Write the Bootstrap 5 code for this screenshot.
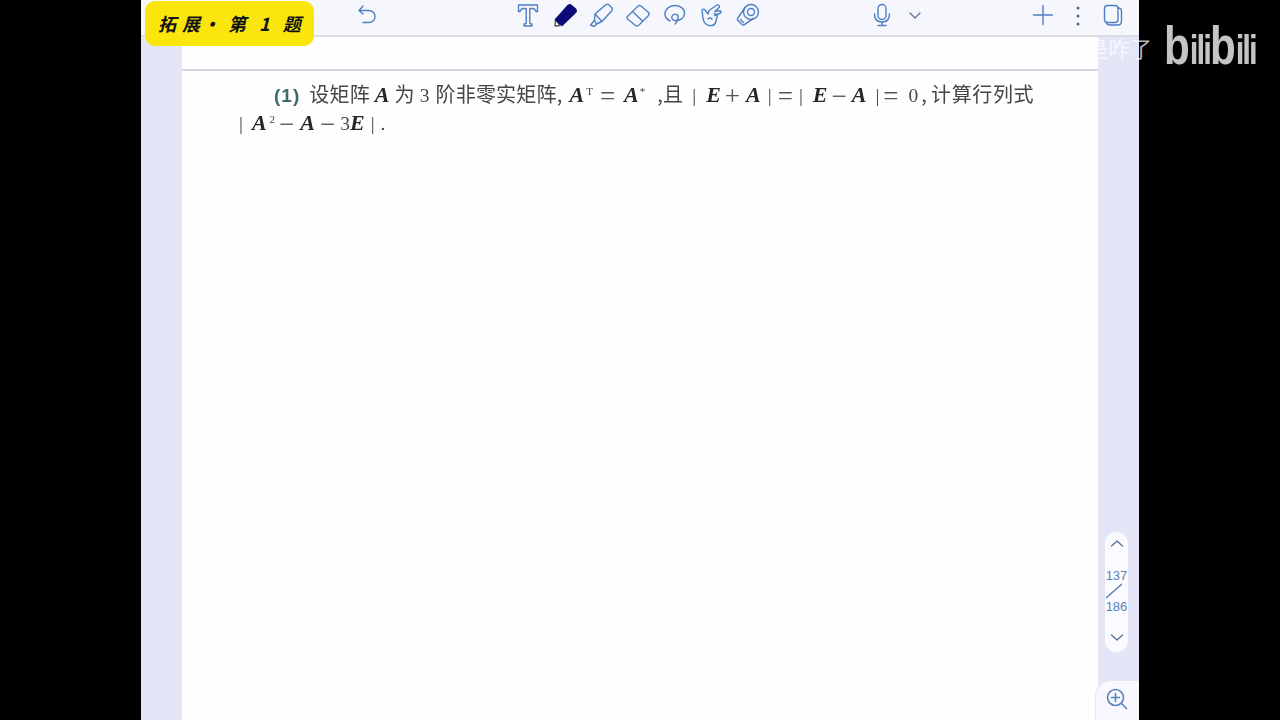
<!DOCTYPE html>
<html lang="zh">
<head>
    <meta charset="UTF-8">
    <meta name="viewport" content="width=device-width, initial-scale=1.0">
    <title>拓展 第1题</title>
    <link href="https://cdn.jsdelivr.net/npm/bootstrap@5.3.0/dist/css/bootstrap.min.css" rel="stylesheet">
    <script defer src="https://cdn.jsdelivr.net/npm/bootstrap@5.3.0/dist/js/bootstrap.bundle.min.js"></script>
    <style>
        html, body { height: 720px; overflow: hidden; background: #000; }
        #app { width: 998px; height: 720px; margin-left: 141px; background: #e4e5f6; }
        #toolbar { height: 37px; background: #f6f6fd; border-bottom: 2px solid #dcdce6; padding: 0 0 6px 214px; }
        #toolbar svg { width: 24px; height: 24px; flex: none; fill: none; stroke: #4f7fc4; stroke-width: 1.4; stroke-linecap: round; stroke-linejoin: round; }
        .tools { gap: 12.67px; margin-left: 137px; }
        .voice { gap: 9px; margin-left: 110px; }
        .actions { gap: 11px; margin-left: 104px; }
        #sheet { width: 916px; height: 683px; margin-left: 41px; background: #fefeff; }
        #sheet-top { height: 34px; border-bottom: 2px solid #d4d5de; }
        #question { padding: 8px 0 0 57px; font-family: "Liberation Serif", "Noto Sans CJK SC", serif; font-size: 19.5px; color: #45454a; line-height: 29px; filter: blur(.35px); }
        .q-line { white-space: nowrap; height: 29px; }
        .q-line + .q-line { margin-top: -1px; }
        .q-first { padding-left: 35px; }
        .q-no { color: #3d6a68; font-weight: 700; font-family: "Liberation Sans", sans-serif; font-size: 19px; letter-spacing: 1px; }
        .zh { font-family: "Noto Sans CJK SC", sans-serif; font-size: 20px; letter-spacing: .2px; }
        .zh-wide { letter-spacing: .6px; }
        .mv { font-weight: 700; font-style: italic; font-size: 22px; color: #26262a; }
        .sign { font-size: 27px; color: #55555a; position: relative; top: 3px; }
        .up { font-size: 11px; position: relative; top: -7px; }
        .sp1 { margin-left: 1px; } .sp2 { margin-left: 2px; } .sp3 { margin-left: 3px; } .sp4 { margin-left: 4px; }
        .sp5 { margin-left: 5px; } .sp6 { margin-left: 6px; } .sp7 { margin-left: 7px; } .sp8 { margin-left: 8px; }
        .sp9 { margin-left: 9px; } .sp10 { margin-left: 10px; } .sp12 { margin-left: 12px; }
        #badge { left: 145px; top: 1px; width: 169px; height: 45px; padding-left: 13px; background: #fae60c; border-radius: 10px; color: #111; font-family: "Noto Sans CJK SC", sans-serif; font-size: 18px; font-weight: 700; font-style: italic; white-space: nowrap; }
        .b-gap0 { margin-left: 6px; }
        .dot-gap { margin-left: 2px; }
        .b-gap1 { margin-left: 8px; }
        .b-gap2 { margin-left: 13px; }
        .b-gap3 { margin-left: 13px; }
        #watermark { left: 1086px; top: 31px; font-family: "Noto Sans CJK SC", sans-serif; font-size: 22px; color: rgba(255,255,255,.72); }
        #logo { left: 1164px; top: 15px; font-family: "Liberation Sans", sans-serif; font-weight: 700; color: #c4c4c4; font-size: 40px; line-height: 60px; letter-spacing: -2.5px; transform: scaleX(.78); transform-origin: left center; white-space: nowrap; }
        #logo span { font-size: 54px; letter-spacing: 0; }
        #pager { left: 1105px; top: 532px; width: 23px; height: 120px; padding: 4px 0 7px; background: #fafaff; border-radius: 12px; color: #5d82b8; font-family: "Liberation Sans", sans-serif; font-size: 13px; line-height: 15px; }
        #pager svg { width: 16px; height: 16px; fill: none; stroke: #5d7596; stroke-width: 1.4; stroke-linecap: round; stroke-linejoin: round; }
        #zoom-tab { left: 1095px; top: 680px; width: 44px; height: 40px; padding: 0 2px 3px 0; background: #f8f8fe; border-top-left-radius: 16px; border: 1px solid #e6e6ee; border-width: 1px 0 0 1px; }
        #zoom-tab svg { width: 24px; height: 24px; fill: none; stroke: #5a82bd; stroke-width: 1.6; stroke-linecap: round; }
    </style>
</head>
<body class="position-relative m-0">
    <div id="app">
        <div id="toolbar" class="d-flex align-items-center">
            <svg viewBox="0 0 24 24"><path d="M8 3 4 7.500 8 11M4 7.500h10a5.500 5.500 0 0 1 0 12H8"/></svg>
            <div class="tools d-flex">
                <svg viewBox="0 0 24 24"><path d="M2.500 2h19v6.500H20q-.5-3-4-3h-2.200v14q0 1.500 2.200 1.500V23H8v-2q2.200 0 2.200-1.500v-14H8q-3.500 0-4 3H2.500z"/></svg>
                <svg viewBox="0 0 24 24"><path d="M7 22.500 2 23l.5-6.500z" fill="#fff" stroke="#555"/><path d="M2.500 16.500 15 2.500q2-1.500 3.500 0l4 3.500q1.500 2 0 3.500L9 22.500z" fill="#0b0b78" stroke="#0b0b78"/></svg>
                <svg viewBox="0 0 24 24"><path d="M6 11 17 1.500q1.500-1 3 .5l3 3q1 1.500 0 2.500L13 18.500zM6 11l-.5 6.500L1.500 22l4 1.500 2-2.500 5.500-2.500M5.500 17.500l2 3.500"/></svg>
                <svg viewBox="0 0 24 24"><path d="M1.500 13.500 12 3q1.500-1 3 0l7.500 6.500q1 1.500 0 3L12.500 22.500q-1.500 1-3 0L1.500 16q-1-1.300 0-2.500zM6.500 8.500l10 9.500"/></svg>
                <svg viewBox="0 0 24 24"><path d="M7 18C3 16 1.500 13 2 9.500 3 5 7.500 2.500 12 2.500c5.500 0 10 3.500 9.500 8.500-.5 4.500-5 7-9.500 6.500-3-.3-4.500-3.500-2-5.500 2.500-2 6 0 5 3.500-.5 2.500-2 4.500-3 5.500"/></svg>
                <svg viewBox="0 0 24 24"><path d="M3 7l1 8q.5 6 6 7.500 6 1 7-4.500l1.500-6-3-1.500M3 7q1.500-1.500 3 0l3 4 1-3.500L18 2q2.500-.5 2.500 2l-4.500 4.500 5-1q1.500 1 .5 2.500l-6 2.500M9 16q2-2 4 0"/></svg>
                <svg viewBox="0 0 24 24"><circle cx="15" cy="9" r="7.500"/><circle cx="15" cy="9" r="3.500"/><path d="M9 4.500 1.500 15.500q-.5 1 .5 2l4 4q1 .8 2 .3l9.500-6.500M4.500 16.500l3 3"/></svg>
            </div>
            <div class="voice d-flex">
                <svg viewBox="0 0 24 24"><rect x="8" y="1.500" width="8" height="15" rx="4"/><path d="M4.500 11q0 8 7.500 8t7.500-8M12 19v3.500M8 22.500h8"/></svg>
                <svg viewBox="0 0 24 24"><path d="m7 10 5 5 5-5" stroke="#5d7596"/></svg>
            </div>
            <div class="actions d-flex">
                <svg viewBox="0 0 24 24"><path d="M12 2.500v19M2.500 12h19"/></svg>
                <svg viewBox="0 0 24 24"><circle cx="12" cy="5" r="1.500" fill="#56658a" stroke="none"/><circle cx="12" cy="13" r="1.500" fill="#56658a" stroke="none"/><circle cx="12" cy="21" r="1.500" fill="#56658a" stroke="none"/></svg>
                <svg viewBox="0 0 24 24"><rect x="3.500" y="2.500" width="13.500" height="17" rx="3"/><path d="M17 5q3.500 0 3.500 3v10q0 4-4 4H9q-3 0-4-2.500"/></svg>
            </div>
        </div>
        <div id="sheet">
            <div id="sheet-top"></div>
            <div id="question">
                <div class="q-line q-first"><span class="q-no">(1)</span><span class="zh sp9">设矩阵</span><span class="mv sp5">A</span><span class="zh sp5">为</span><span class="sp5">3</span><span class="zh sp6">阶非零实矩阵,</span><span class="mv sp7">A</span><span class="up sp2">T</span><span class="sign sp7">=</span><span class="mv sp9">A</span><span class="up sp1">*</span><span class="zh sp12">,且</span><span class="sp9">|</span><span class="mv sp10">E</span><span class="sign sp4">+</span><span class="mv sp6">A</span><span class="sp7">|</span><span class="sign sp6">=</span><span class="sp6">|</span><span class="mv sp10">E</span><span class="sign sp4">−</span><span class="mv sp5">A</span><span class="sp9">|</span><span class="sign sp4">=</span><span class="sp10">0</span><span class="zh sp3">,</span><span class="zh zh-wide sp4">计算行列式</span></div>
                <div class="q-line">|<span class="mv sp9">A</span><span class="up sp3">2</span><span class="sign sp4">−</span><span class="mv sp6">A</span><span class="sign sp5">−</span><span class="sp5">3</span><span class="mv">E</span><span class="sp6">|</span><span class="sp6">.</span></div>
            </div>
        </div>
    </div>

    <div id="badge" class="position-absolute d-flex align-items-center"><span>拓</span><span class="b-gap0">展</span><span class="dot-gap">•</span><span class="b-gap1">第</span><span class="b-gap2">1</span><span class="b-gap3">题</span></div>
    <div id="watermark" class="position-absolute">是咋了</div>
    <div id="logo" class="position-absolute"><span>b</span>ili<span>b</span>ili</div>

    <div id="pager" class="position-absolute d-flex flex-column align-items-center justify-content-between text-center">
        <svg viewBox="0 0 16 16"><path d="m2.500 10 5.500-5 5.500 5"/></svg>
        <div>137
            <svg class="d-block my-0" viewBox="0 0 16 16"><path d="M0 15 16 1" stroke="#5d82b8"/></svg>
            186</div>
        <svg viewBox="0 0 16 16"><path d="m2.500 6 5.500 5 5.500-5"/></svg>
    </div>
    <div id="zoom-tab" class="position-absolute d-flex align-items-center justify-content-center">
        <svg viewBox="0 0 24 24"><circle cx="10.500" cy="10.500" r="8"/><path d="M10.500 6.500v8M6.500 10.500h8M16.500 16.500l5 5"/></svg>
    </div>
</body>
</html>
